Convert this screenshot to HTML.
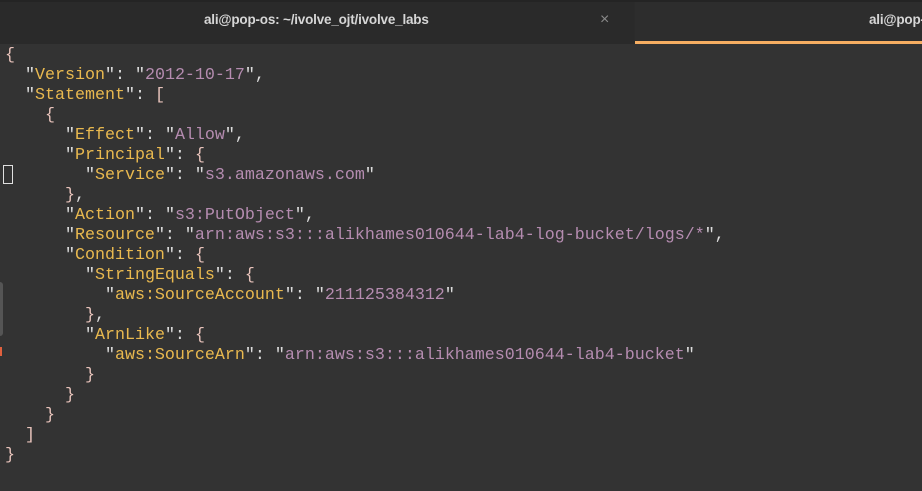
<!DOCTYPE html>
<html><head><meta charset="utf-8"><style>
html,body{margin:0;padding:0;width:922px;height:491px;overflow:hidden;background:#333333;}
.bar{position:absolute;left:0;top:0;width:922px;height:44px;background:#2b2b2b;border-top:2px solid #242424;box-sizing:border-box;overflow:hidden;}
.tab1{position:absolute;left:0;top:0;width:634px;height:42px;background:#2a2a2a;}
.tab2{position:absolute;left:635px;top:0;width:287px;height:42px;background:#2d2d2d;}
.title{position:absolute;top:10px;font:bold 13.5px "Liberation Sans",sans-serif;color:#d6d6d6;white-space:nowrap;letter-spacing:-0.2px;}
.close{position:absolute;left:600px;top:9px;font:16px "Liberation Sans",sans-serif;color:#8a8a8a;}
.ul{position:absolute;left:635px;top:39px;width:287px;height:3px;background:#f6ae62;}
pre{position:absolute;left:5px;top:46px;margin:0;font:16.67px/20px "Liberation Mono",monospace;color:#dddddd;}
.k{color:#e9b94f}.s{color:#b58cb0}.p{color:#e8c3bb}
.cur{position:absolute;left:3px;top:165px;width:10px;height:19px;border:1px solid #e0e0e0;box-sizing:border-box;}
.sb{position:absolute;left:0;top:282px;width:3px;height:54px;background:#555;border-radius:0 3px 3px 0;}
.red{position:absolute;left:0;top:347px;width:2px;height:9px;background:#e0603e;}
</style></head><body>
<div class="bar"><div class="tab1"></div><div class="tab2"></div>
<div class="title" style="left:204px">ali@pop-os: ~/ivolve_ojt/ivolve_labs</div>
<div class="close">×</div>
<div class="title" style="left:869px">ali@pop-os</div>
<div class="ul"></div></div>
<pre><span class="p">{</span>
  "<span class="k">Version</span>": "<span class="s">2012-10-17</span>",
  "<span class="k">Statement</span>": <span class="p">[</span>
    <span class="p">{</span>
      "<span class="k">Effect</span>": "<span class="s">Allow</span>",
      "<span class="k">Principal</span>": <span class="p">{</span>
        "<span class="k">Service</span>": "<span class="s">s3.amazonaws.com</span>"
      <span class="p">}</span>,
      "<span class="k">Action</span>": "<span class="s">s3:PutObject</span>",
      "<span class="k">Resource</span>": "<span class="s">arn:aws:s3:::alikhames010644-lab4-log-bucket/logs/*</span>",
      "<span class="k">Condition</span>": <span class="p">{</span>
        "<span class="k">StringEquals</span>": <span class="p">{</span>
          "<span class="k">aws:SourceAccount</span>": "<span class="s">211125384312</span>"
        <span class="p">}</span>,
        "<span class="k">ArnLike</span>": <span class="p">{</span>
          "<span class="k">aws:SourceArn</span>": "<span class="s">arn:aws:s3:::alikhames010644-lab4-bucket</span>"
        <span class="p">}</span>
      <span class="p">}</span>
    <span class="p">}</span>
  <span class="p">]</span>
<span class="p">}</span></pre>
<div class="cur"></div><div class="sb"></div><div class="red"></div>
</body></html>
